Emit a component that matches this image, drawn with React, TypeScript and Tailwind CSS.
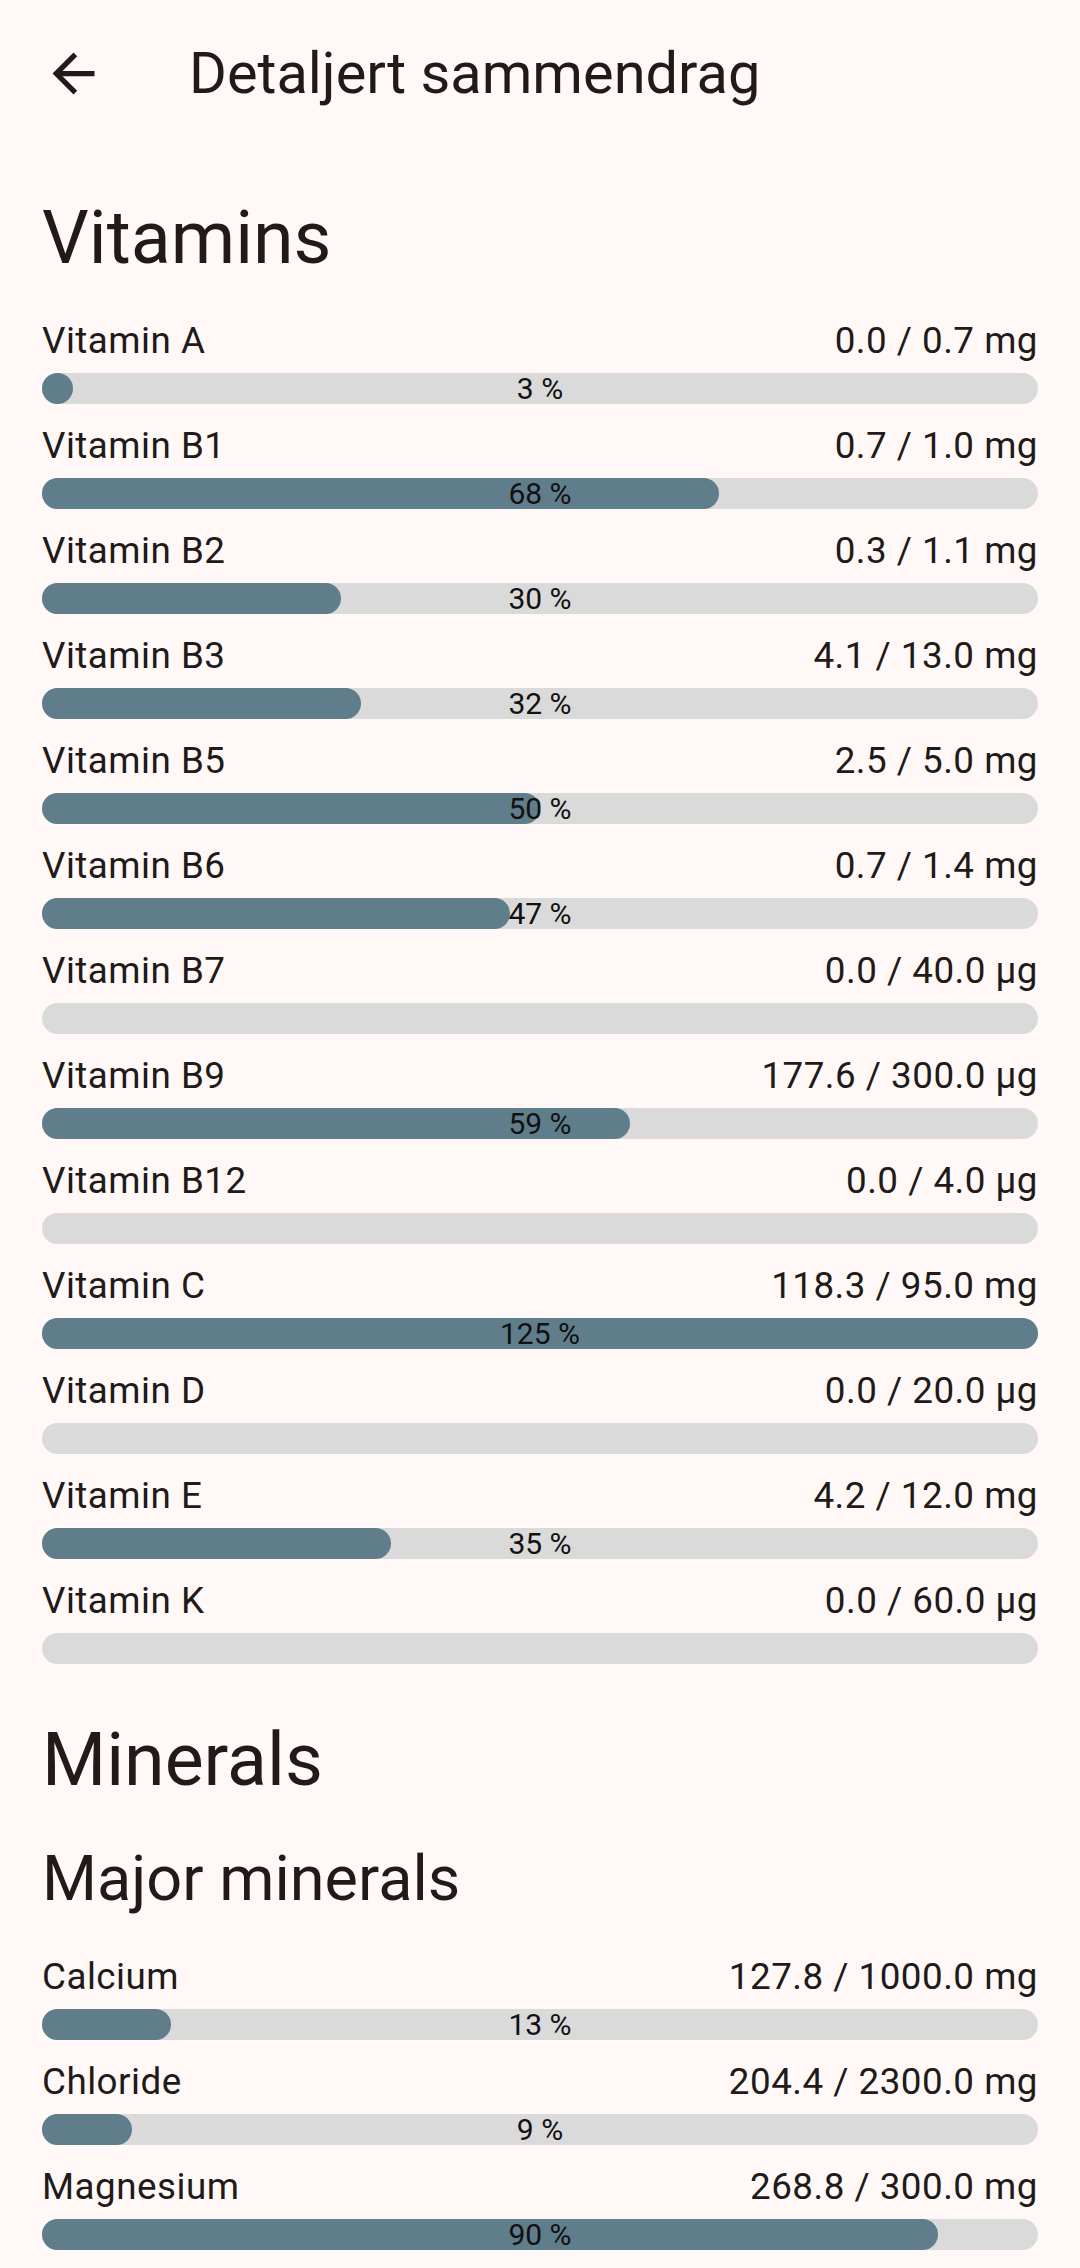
type Nutrient = {
  name: string;
  amount: string;
  percent: number;
};

const vitamins: Nutrient[] = [
  { name: "Vitamin A", amount: "0.0 / 0.7 mg", percent: 3 },
  { name: "Vitamin B1", amount: "0.7 / 1.0 mg", percent: 68 },
  { name: "Vitamin B2", amount: "0.3 / 1.1 mg", percent: 30 },
  { name: "Vitamin B3", amount: "4.1 / 13.0 mg", percent: 32 },
  { name: "Vitamin B5", amount: "2.5 / 5.0 mg", percent: 50 },
  { name: "Vitamin B6", amount: "0.7 / 1.4 mg", percent: 47 },
  { name: "Vitamin B7", amount: "0.0 / 40.0 µg", percent: 0 },
  { name: "Vitamin B9", amount: "177.6 / 300.0 µg", percent: 59 },
  { name: "Vitamin B12", amount: "0.0 / 4.0 µg", percent: 0 },
  { name: "Vitamin C", amount: "118.3 / 95.0 mg", percent: 125 },
  { name: "Vitamin D", amount: "0.0 / 20.0 µg", percent: 0 },
  { name: "Vitamin E", amount: "4.2 / 12.0 mg", percent: 35 },
  { name: "Vitamin K", amount: "0.0 / 60.0 µg", percent: 0 },
];

const majorMinerals: Nutrient[] = [
  { name: "Calcium", amount: "127.8 / 1000.0 mg", percent: 13 },
  { name: "Chloride", amount: "204.4 / 2300.0 mg", percent: 9 },
  { name: "Magnesium", amount: "268.8 / 300.0 mg", percent: 90 },
];

function NutrientRow({ item }: { item: Nutrient }) {
  const fill = Math.min(item.percent, 100);

  return (
    <div className="pb-[16px]">
      {/* navn + mengde */}
      <div className="flex justify-between items-center h-[52px] text-[36.75px] leading-[52px] tracking-[0.5px] text-[#201a19]">
        <span>{item.name}</span>
        <span>{item.amount}</span>
      </div>

      {/* progress */}
      <div className="relative mt-[6px] h-[31px] rounded-full bg-[#dadada]">
        {item.percent > 0 && (
          <div
            className="absolute left-0 top-0 h-full min-w-[31px] rounded-full bg-[#607d8b]"
            style={{ width: `${fill}%` }}
          />
        )}
        {item.percent > 0 && (
          <div className="absolute inset-0 flex items-center justify-center text-[30px] leading-[31px] text-[#111]">
            {item.percent} %
          </div>
        )}
      </div>
    </div>
  );
}

export default function App() {
  return (
    <div className="min-h-[2268px] bg-[#fff8f6] font-['Roboto',sans-serif] text-[#201a19]">
      {/* topplinje */}
      <div className="flex items-center h-[146px]">
        <div className="flex items-center justify-center w-[126px] h-[126px] ml-[10px]">
          <svg viewBox="0 0 24 24" className="w-[63px] h-[63px]" fill="#201a19">
            <path d="M20 11H7.83l5.59-5.59L12 4l-8 8 8 8 1.41-1.41L7.83 13H20v-2z" />
          </svg>
        </div>
        <h1 className="ml-[53px] text-[57.75px] leading-[73px] font-normal">
          Detaljert sammendrag
        </h1>
      </div>

      <div className="px-[42px]">
        {/* vitaminer */}
        <h2 className="mt-[45px] text-[73.5px] leading-[94px] font-normal">Vitamins</h2>
        <div className="mt-[30px]">
          {vitamins.map((v) => (
            <NutrientRow key={v.name} item={v} />
          ))}
        </div>

        {/* mineraler */}
        <h2 className="mt-[33px] text-[73.5px] leading-[94px] font-normal">Minerals</h2>
        <h3 className="mt-[30px] text-[63px] leading-[84px] font-normal">Major minerals</h3>
        <div className="mt-[30px]">
          {majorMinerals.map((m) => (
            <NutrientRow key={m.name} item={m} />
          ))}
        </div>
      </div>
    </div>
  );
}
